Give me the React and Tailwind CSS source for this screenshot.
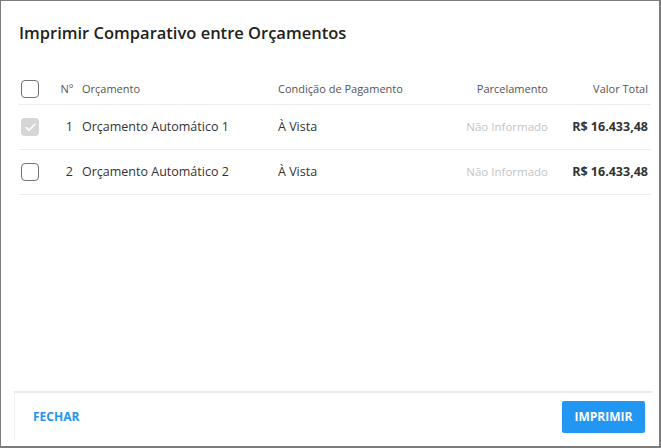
import { Check } from 'lucide-react'

const rows = [
  { n: 1, nome: 'Orçamento Automático 1', cond: 'À Vista', parc: 'Não Informado', valor: 'R$ 16.433,48', checked: true },
  { n: 2, nome: 'Orçamento Automático 2', cond: 'À Vista', parc: 'Não Informado', valor: 'R$ 16.433,48', checked: false },
]

function Box({ checked }) {
  if (checked) {
    return (
      <div className="w-[18px] h-[18px] rounded-[4px] bg-[#d6d6d6] flex items-center justify-center">
        <Check size={13} strokeWidth={3} className="text-white" />
      </div>
    )
  }
  return <div className="w-[18px] h-[18px] rounded-[4px] border-[1.5px] border-[#747474] bg-white" />
}

export default function App() {
  return (
    <div
      className="w-[661px] h-[448px] bg-white border-l border-t border-r-2 border-b-2 border-[#7c7c7c] flex flex-col"
      style={{ fontFamily: '"Open Sans", "Liberation Sans", sans-serif' }}
    >
      <div className="pl-[18px] pt-[20px] text-[16.5px] font-semibold text-[#222] leading-[24px]">
        Imprimir Comparativo entre Orçamentos
      </div>

      <div className="ml-[18px] mr-[8px] mt-[30px]">
        <div className="flex items-center h-[30px] border-b border-[#ececec] text-[11px] text-[#555]">
          <div className="w-[31px] pl-[2px] pb-[1px]"><Box /></div>
          <div className="w-[23px] text-right">Nº</div>
          <div className="w-[205px] pl-[9px]">Orçamento</div>
          <div className="flex-1">Condição de Pagamento</div>
          <div className="w-[120px] text-right pr-[7px]">Parcelamento</div>
          <div className="w-[96px] text-right pr-[3px]">Valor Total</div>
        </div>
        {rows.map(r => (
          <div key={r.n} className="flex items-center h-[45px] border-b border-[#ececec] text-[12.5px] text-[#333]">
            <div className="w-[31px] pl-[2px]"><Box checked={r.checked} /></div>
            <div className="w-[23px] text-right">{r.n}</div>
            <div className="w-[205px] pl-[9px]">{r.nome}</div>
            <div className="flex-1">{r.cond}</div>
            <div className="w-[120px] text-right pr-[7px] text-[11.5px] text-[#c4c4c4]">{r.parc}</div>
            <div className="w-[96px] text-right pr-[3px] font-bold text-[#333]">{r.valor}</div>
          </div>
        ))}
      </div>

      <div className="flex-1" />

      <div className="ml-[13px] mr-[7px] mb-[6px] h-[49px] border-t-2 border-[#ebebeb] border-l border-l-[#f2f2f2] flex items-center justify-between pl-[18px] pr-[7px]">
        <button className="text-[12px] font-bold text-[#2196f3]">FECHAR</button>
        <button className="w-[83px] h-[32px] rounded-[2px] bg-[#2196f3] text-white text-[12px] font-bold">IMPRIMIR</button>
      </div>
    </div>
  )
}
